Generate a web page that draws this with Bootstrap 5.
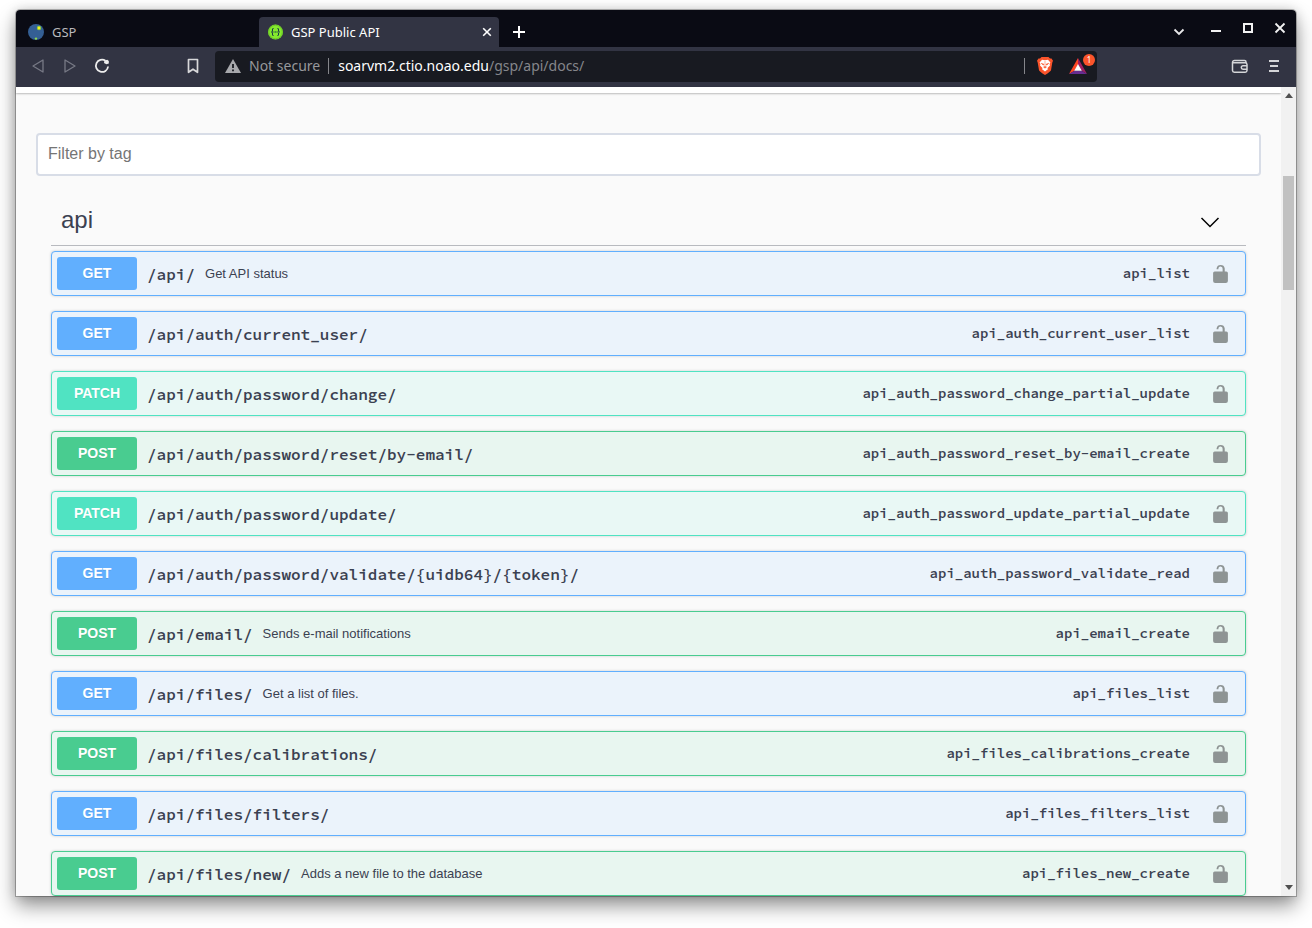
<!DOCTYPE html>
<html lang="en">
<head>
<meta charset="utf-8">
<meta name="viewport" content="width=device-width, initial-scale=1">
<title>GSP Public API</title>
<link href="https://cdn.jsdelivr.net/npm/bootstrap@5.3.0/dist/css/bootstrap.min.css" rel="stylesheet">
<style>
body { background: #fff; font-family: "Liberation Sans", Arial, sans-serif; color: #3b4151; padding: 10px 16px 32px; }
button { background: none; border: 0; padding: 0; color: inherit; }
svg { display: block; flex: none; }

/* Browser window */
.browser { border-radius: 4px 4px 0 0; box-shadow: 0 0 0 1px rgba(0,0,0,.25), 0 10px 20px rgba(0,0,0,.42), 0 0 12px rgba(0,0,0,.16); }
.tabbar { height: 37px; background: #0a0b14; border-radius: 4px 4px 0 0; color: #e8e8ea; padding-left: 3px; }
.tab { width: 240px; height: 30px; font: 13px/30px "Noto Sans", sans-serif; color: #b9b9bc; border-radius: 4px 4px 0 0; padding: 0 7px 0 9px; gap: 8px; text-align: left; }
.tab-current { background: #323443; color: #fff; }
.new-tab { margin: 0 0 8px 14px; }
.window-buttons { padding: 0 10px 2px 0; }
.toolbar { height: 40px; background: #323443; color: #d4d5d8; padding: 0 16px 2px 14px; }
.navset { width: 185px; gap: 16px; }
.address { width: 882px; height: 31px; background: #181a21; border-radius: 4px; font: 14px/28px "Noto Sans", sans-serif; color: #97989c; padding: 0 10px 0 10px; }
.address a { color: #85868b; text-decoration: none; margin-left: 9px; }
.address strong { color: #fff; font-weight: 400; }
.divider { width: 1px; height: 16px; background: #85868b; }
.wallet-group { gap: 19px; margin-left: auto; }
.notice { top: -4px; right: -8px; width: 12px; height: 12px; border-radius: 50%; background: #fb542b; color: #fff; font: 8px/12px "Noto Sans", sans-serif; text-align: center; }

/* Documentation page */
.docs { background: #fafafa; min-width: 0; }
.schemes { height: 6px; background: #fff; box-shadow: 0 1px 2px rgba(0,0,0,.25); }
.filter-wrap { padding: 40px 20px 0; }
.filter-box { height: 43px; border: 2px solid #d8dde7; border-radius: 4px; padding: 0 10px 2px; font-size: 16px; color: #3b4151; }
.filter-box::placeholder { color: #757575; opacity: 1; }
.tag-section { padding: 20px 35px 0; }
.tag-head { height: 50px; border-bottom: 1px solid rgba(59,65,81,.35); margin-bottom: 5px; padding: 0 26px 2px 10px; }
.tag-head h3 { font-size: 24px; line-height: 28px; font-weight: 400; margin: 0; }

.op { border: 1px solid var(--tone); background: var(--wash); border-radius: 4px; box-shadow: 0 0 3px rgba(0,0,0,.19); padding: 5px 17px 5px 5px; margin-bottom: 15px; }
.op:last-child { margin-bottom: 0; }
.op-get { --tone: #61affe; --wash: #ebf3fb; }
.op-post { --tone: #49cc90; --wash: #e8f6f0; }
.op-patch { --tone: #50e3c2; --wash: #e9f8f5; }
.method { width: 80px; height: 33px; line-height: 33px; background: var(--tone); color: #fff; font-size: 14px; font-weight: 700; border-radius: 3px; text-align: center; text-shadow: 0 1px 0 rgba(0,0,0,.1); }
.path { font: 600 16px/20px "Source Code Pro", "Liberation Mono", monospace; padding: 0 10px; }
.about { font-size: 13px; line-height: 20px; }
.op-id { font: 600 14px/20px "Source Code Pro", "Liberation Mono", monospace; padding-bottom: 2px; }
.lock { color: #8e9494; margin-left: 23px; }

.scroll { width: 15px; background: #f1f1f1; padding: 6px 2px; }
.thumb { width: 11px; height: 114px; background: #c1c1c1; margin-top: 78px; }
</style>
</head>
<body>
<svg class="d-none">
  <symbol id="unlock" viewBox="0 0 14 18"><path fill="currentColor" d="M9 7V4.500A2 2 0 0 0 5 4.200V4.900H3.300V4.200A3.900 3.900 0 0 1 11 4.200V7H12.500A1.500 1.500 0 0 1 14 8.500V16A2 2 0 0 1 12 18H2A2 2 0 0 1 0 16V8.500A1.500 1.500 0 0 1 1.500 7Z"/></symbol>
</svg>

<div class="browser">
  <header>
    <div class="tabbar d-flex align-items-end">
      <button class="tab d-flex align-items-center" type="button">
        <svg width="16" height="16" viewBox="0 0 16 16"><circle cx="8" cy="8" r="8" fill="#345f94"/><circle cx="11" cy="4" r="2.200" fill="#8fca3e"/><circle cx="11" cy="4" r="1.200" fill="#fff01c"/><circle cx="8" cy="14.600" r="1.200" fill="#8fd84a"/></svg>
        <span>GSP</span>
      </button>
      <button class="tab tab-current d-flex align-items-center" type="button">
        <svg width="15" height="16" viewBox="0 0 16 16"><circle cx="8" cy="8" r="8" fill="#85ea2d"/><circle cx="8" cy="8" r="7.200" fill="none" stroke="#62bd25" stroke-width=".8"/><path d="M6 4.200C4.600 4.200 4.800 5 4.800 6.500 4.800 7.500 4.400 8 3.500 8 4.400 8 4.800 8.500 4.800 9.500 4.800 11 4.600 11.800 6 11.800M10 4.200C11.400 4.200 11.200 5 11.200 6.500 11.200 7.500 11.600 8 12.500 8 11.600 8 11.200 8.500 11.200 9.500 11.200 11 11.400 11.800 10 11.800" fill="none" stroke="#173647" stroke-width="1.100"/><path d="M5.800 8H10.400" stroke="#173647" stroke-width="1.200" stroke-dasharray="1.200 .5"/></svg>
        <span class="me-auto">GSP Public API</span>
        <svg width="10" height="10" viewBox="0 0 10 10"><path d="M1.200 1.200L8.800 8.800M8.800 1.200L1.200 8.800" stroke="#fff" stroke-width="1.600"/></svg>
      </button>
      <button class="new-tab" type="button" aria-label="New tab"><svg width="12" height="14" viewBox="0 0 12 14"><path d="M6 1V13M0 7H12" stroke="#fff" stroke-width="2"/></svg></button>
      <div class="window-buttons ms-auto d-flex align-items-center align-self-center gap-3">
        <button type="button" class="pt-2 me-2" aria-label="Search tabs"><svg width="14" height="8" viewBox="0 0 14 8"><path d="M2.500 1.500L7 6L11.500 1.500" fill="none" stroke="#e8e8ea" stroke-width="1.800"/></svg></button>
        <button type="button" class="pt-2" aria-label="Minimize"><svg width="12" height="6" viewBox="0 0 12 6"><path d="M1 2H11" stroke="#f2f2f2" stroke-width="2"/></svg></button>
        <button type="button" class="ms-1" aria-label="Maximize"><svg width="12" height="12" viewBox="0 0 12 12"><rect x="2" y="2" width="8" height="8" fill="none" stroke="#f2f2f2" stroke-width="2"/></svg></button>
        <button type="button" class="ms-1" aria-label="Close"><svg width="12" height="12" viewBox="0 0 12 12"><path d="M1.500 1.500L10.500 10.500M10.500 1.500L1.500 10.500" stroke="#f2f2f2" stroke-width="1.800"/></svg></button>
      </div>
    </div>

    <div class="toolbar d-flex align-items-center">
      <div class="navset d-flex align-items-center">
        <button type="button" aria-label="Back"><svg width="16" height="16" viewBox="0 0 16 16"><path d="M13 2V14L3 8Z" fill="none" stroke="#777985" stroke-width="1.300" stroke-linejoin="round"/></svg></button>
        <button type="button" aria-label="Forward"><svg width="16" height="16" viewBox="0 0 16 16"><path d="M3 2V14L13 8Z" fill="none" stroke="#777985" stroke-width="1.300" stroke-linejoin="round"/></svg></button>
        <button type="button" aria-label="Reload"><svg width="16" height="16" viewBox="0 0 16 16"><path d="M11.500 2.800A6.100 6.100 0 1 0 14.100 8.500" fill="none" stroke="#ededed" stroke-width="1.800"/><path d="M10.500 2.500L13.300 1.800L14.800 3V5.600L12.500 6.300L10 5Z" fill="#ededed"/></svg></button>
        <button type="button" class="ms-auto me-3" aria-label="Bookmark"><svg width="12" height="16" viewBox="0 0 12 16"><path d="M1.500 1.500H10.500V14.300L6 11.200L1.500 14.300Z" fill="none" stroke="#d8d8da" stroke-width="1.700" stroke-linejoin="round"/></svg></button>
      </div>
      <div class="address d-flex align-items-center">
        <svg width="16" height="14" viewBox="0 0 16 14"><path d="M8 0L16 14H0Z" fill="#a7a8ac"/><path d="M8 5V9M8 10.500V12.300" stroke="#181a21" stroke-width="1.800"/></svg>
        <span class="ms-2">Not secure</span>
        <span class="divider ms-2"></span>
        <a href="#"><strong>soarvm2.ctio.noao.edu</strong>/gsp/api/docs/</a>
        <span class="divider ms-auto"></span>
        <button type="button" class="mx-2 ps-1" aria-label="Shields"><svg width="16" height="18" viewBox="0 0 16 18"><path d="M4.500 0H11.500L13 1.600L14.500 1.500L16 3.800L15.300 5.500L14 13.200Q13.600 14.400 8 18Q2.400 14.400 2 13.200L.7 5.500L0 3.800L1.500 1.500L3 1.600Z" fill="#fb542b"/><path d="M5 2.800L8 3.300L11 2.800L13.400 5.500L12.600 7L13 8.500L10.300 11.200L11.200 12L8 14.500L4.800 12L5.700 11.200L3 8.500L3.400 7L2.600 5.500Z" fill="#fff"/><path d="M4.200 6.300L7 7.200L6.300 8.200ZM11.800 6.300L9 7.200L9.700 8.200ZM6.500 10L8 9.400L9.500 10L8 11.200ZM8 4V9.400" fill="#fb542b" stroke="#fb542b" stroke-width=".5"/></svg></button>
        <button type="button" class="position-relative ms-2" aria-label="Rewards"><svg width="18" height="16" viewBox="0 0 18 16"><path d="M9 0L0 16L5.500 12.800L9 6.500Z" fill="#ff4724"/><path d="M9 0L18 16L12.500 12.800L9 6.500Z" fill="#9e1f63"/><path d="M0 16H18L12.500 12.800H5.500Z" fill="#662d91"/><path d="M9 6L12.800 12.800H5.200Z" fill="#fff"/></svg><span class="notice position-absolute">1</span></button>
      </div>
      <div class="wallet-group d-flex align-items-center">
        <button type="button" aria-label="Wallet"><svg width="18" height="16" viewBox="0 0 18 16"><path d="M15 4.500V4A1.500 1.500 0 0 0 13.500 2.500H3.500A2 2 0 0 0 1.500 4.500V12.500A1.800 1.800 0 0 0 3.300 14.200H14.200A1.800 1.800 0 0 0 16 12.500V6.500A1.800 1.800 0 0 0 14.200 4.800H2M16 7.800H12A1.700 1.700 0 0 0 12 11.200H16" fill="none" stroke="#d4d5d8" stroke-width="1.500"/></svg></button>
        <button type="button" aria-label="Menu"><svg width="12" height="14" viewBox="0 0 12 14"><path d="M1 2H11M2 7H10M1 12H11" stroke="#d4d5d8" stroke-width="2"/></svg></button>
      </div>
    </div>
  </header>

  <div class="d-flex">
    <main class="docs flex-grow-1">
      <div class="schemes"></div>
      <div class="filter-wrap">
        <input class="filter-box form-control w-100" type="text" placeholder="Filter by tag" aria-label="Filter by tag">
      </div>
      <section class="tag-section">
        <div class="tag-head d-flex align-items-center">
          <h3 class="me-auto">api</h3>
          <button type="button" aria-label="Collapse operation" class="pt-1"><svg width="20" height="12" viewBox="0 0 20 12"><path d="M1.500 2L10 10.500L18.500 2" fill="none" stroke="#000" stroke-width="1.500"/></svg></button>
        </div>

        <div class="op op-get d-flex align-items-center"><span class="method">GET</span><span class="path">/api/</span><span class="about">Get API status</span><span class="op-id ms-auto">api_list</span><button type="button" class="lock" aria-label="Authorize"><svg width="15" height="19"><use href="#unlock"/></svg></button></div>
        <div class="op op-get d-flex align-items-center"><span class="method">GET</span><span class="path">/api/auth/current_user/</span><span class="op-id ms-auto">api_auth_current_user_list</span><button type="button" class="lock" aria-label="Authorize"><svg width="15" height="19"><use href="#unlock"/></svg></button></div>
        <div class="op op-patch d-flex align-items-center"><span class="method">PATCH</span><span class="path">/api/auth/password/change/</span><span class="op-id ms-auto">api_auth_password_change_partial_update</span><button type="button" class="lock" aria-label="Authorize"><svg width="15" height="19"><use href="#unlock"/></svg></button></div>
        <div class="op op-post d-flex align-items-center"><span class="method">POST</span><span class="path">/api/auth/password/reset/by-email/</span><span class="op-id ms-auto">api_auth_password_reset_by-email_create</span><button type="button" class="lock" aria-label="Authorize"><svg width="15" height="19"><use href="#unlock"/></svg></button></div>
        <div class="op op-patch d-flex align-items-center"><span class="method">PATCH</span><span class="path">/api/auth/password/update/</span><span class="op-id ms-auto">api_auth_password_update_partial_update</span><button type="button" class="lock" aria-label="Authorize"><svg width="15" height="19"><use href="#unlock"/></svg></button></div>
        <div class="op op-get d-flex align-items-center"><span class="method">GET</span><span class="path">/api/auth/password/validate/{uidb64}/{token}/</span><span class="op-id ms-auto">api_auth_password_validate_read</span><button type="button" class="lock" aria-label="Authorize"><svg width="15" height="19"><use href="#unlock"/></svg></button></div>
        <div class="op op-post d-flex align-items-center"><span class="method">POST</span><span class="path">/api/email/</span><span class="about">Sends e-mail notifications</span><span class="op-id ms-auto">api_email_create</span><button type="button" class="lock" aria-label="Authorize"><svg width="15" height="19"><use href="#unlock"/></svg></button></div>
        <div class="op op-get d-flex align-items-center"><span class="method">GET</span><span class="path">/api/files/</span><span class="about">Get a list of files.</span><span class="op-id ms-auto">api_files_list</span><button type="button" class="lock" aria-label="Authorize"><svg width="15" height="19"><use href="#unlock"/></svg></button></div>
        <div class="op op-post d-flex align-items-center"><span class="method">POST</span><span class="path">/api/files/calibrations/</span><span class="op-id ms-auto">api_files_calibrations_create</span><button type="button" class="lock" aria-label="Authorize"><svg width="15" height="19"><use href="#unlock"/></svg></button></div>
        <div class="op op-get d-flex align-items-center"><span class="method">GET</span><span class="path">/api/files/filters/</span><span class="op-id ms-auto">api_files_filters_list</span><button type="button" class="lock" aria-label="Authorize"><svg width="15" height="19"><use href="#unlock"/></svg></button></div>
        <div class="op op-post d-flex align-items-center"><span class="method">POST</span><span class="path">/api/files/new/</span><span class="about">Adds a new file to the database</span><span class="op-id ms-auto">api_files_new_create</span><button type="button" class="lock" aria-label="Authorize"><svg width="15" height="19"><use href="#unlock"/></svg></button></div>
      </section>
    </main>
    <div class="scroll d-flex flex-column align-items-center" aria-hidden="true">
      <svg width="8" height="5" viewBox="0 0 8 5"><path d="M4 0L8 5H0Z" fill="#505050"/></svg>
      <div class="thumb"></div>
      <svg class="mt-auto" width="8" height="5" viewBox="0 0 8 5"><path d="M0 0H8L4 5Z" fill="#505050"/></svg>
    </div>
  </div>
</div>
<script src="https://cdn.jsdelivr.net/npm/bootstrap@5.3.0/dist/js/bootstrap.bundle.min.js"></script>
</body>
</html>
